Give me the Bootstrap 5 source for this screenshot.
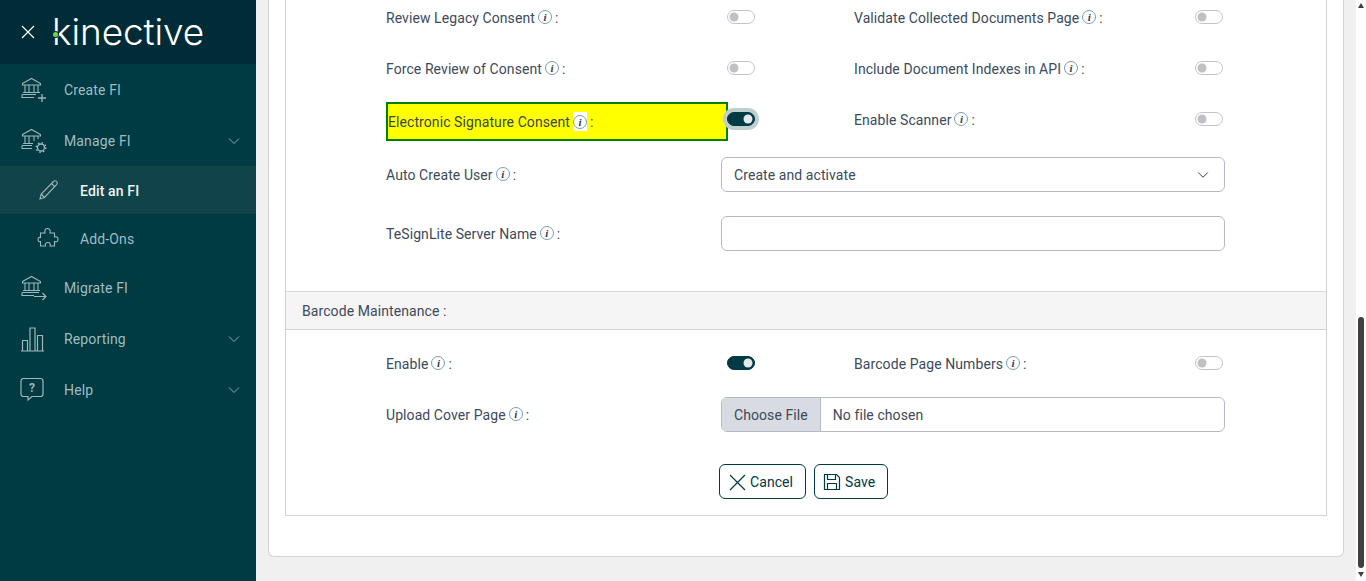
<!DOCTYPE html>
<html lang="en">
<head>
<meta charset="UTF-8">
<meta name="viewport" content="width=device-width, initial-scale=1.0">
<title>Edit an FI</title>
<link rel="stylesheet" href="https://cdn.jsdelivr.net/npm/bootstrap@5.3.0/dist/css/bootstrap.min.css">
<style>
    html, body { height: 100%; overflow: hidden; }
    body { font-family: Roboto, "Liberation Sans", sans-serif; font-size: 14px; letter-spacing: .08px; color: #3d4a5c; background: #f0f0f0; }
    .app-shell { height: 581px; }

    .side-bar { width: 256px; flex: 0 0 256px; background: #003a43; }
    .side-brand { height: 64px; background: #002c37; color: #fff; padding-left: 21px; }
    .brand-name { font-family: Inter, sans-serif; font-weight: 300; font-size: 37px; letter-spacing: -.1px; line-height: 1; margin-left: 17px; position: relative; margin-top: -1px; }
    .brand-dot { position: absolute; left: 1px; top: 19px; width: 5px; height: 5px; border-radius: 50%; background: #6fd44a; box-shadow: 0 0 0 1px #002c37; }
    .side-link { height: 51px; padding: 2px 16px 0 20px; color: #9fbcc1; font-size: 14px; letter-spacing: .14px; }
    .side-link:hover { color: #fff; }
    .side-link svg.side-icon { width: 28px; height: 28px; flex: 0 0 28px; margin: -2px 16px 0 0; color: #9fb6ba; }
    .side-sub { height: 48px; padding-left: 36px; }
    .side-sub svg.side-icon { width: 24px; height: 24px; flex: 0 0 24px; margin-right: 20px; }
    .side-sub.is-active { background: #11434b; color: #eef4f4; font-weight: 500; }
    .side-caret { margin-left: auto; margin-top: -2px; width: 12px; height: 8px; color: #8fa9ae; }

    .main-pane { background: #f0f0f0; padding: 0 12px 24px 12px; min-width: 0; }
    .form-shell { background: #fff; border: 1px solid #d3d3d3; border-top: 0; border-radius: 0 0 6px 6px; padding: 0 16px 40px; height: 557px; }
    .form-box { border: 1px solid #d3d3d3; border-top: 0; height: 516px; }
    .fi-row { height: 51px; padding-left: 100px; }
    .fi-row-first { height: 34px; margin-bottom: 8px; }
    .fi-label { width: 335px; flex: 0 0 335px; padding-top: 2px; }
    .fi-toggle { width: 133px; flex: 0 0 133px; padding-left: 6px; }
    .fi-label-b { width: 341px; flex: 0 0 341px; padding-top: 2px; }
    .fi-row-low .fi-label, .fi-row-low .fi-label-b { padding-top: 4px; }
    .fi-switch { padding-left: 0; min-height: 0; margin: 0; line-height: 1; }
    .fi-switch .form-check-input { margin: 0; float: none; display: block; border-color: #c4c4c8; background-image: url("data:image/svg+xml,%3csvg xmlns='http://www.w3.org/2000/svg' viewBox='-4 -4 8 8'%3e%3ccircle r='3' fill='%23c0c0c6'/%3e%3c/svg%3e"); }
    .fi-switch .form-check-input:checked { background-color: #003a43; border-color: #003a43; background-image: url("data:image/svg+xml,%3csvg xmlns='http://www.w3.org/2000/svg' viewBox='-4 -4 8 8'%3e%3ccircle r='3' fill='%23e4eaea'/%3e%3c/svg%3e"); }
    .fi-switch .is-focused { box-shadow: 0 0 0 4px #bfcfcf; position: relative; }
    .info-dot { display: inline-block; width: 14px; height: 14px; border: 1px solid #7d9bb0; border-radius: 50%; font: italic 700 11px/12px "Liberation Serif", serif; text-align: center; color: #2c3e50; margin: 0 3px 0 3px; vertical-align: 2px; background: #fff; letter-spacing: 0; }
    .fi-marked { width: 342px; flex: 0 0 342px; margin-right: -7px; height: 39px; margin-top: 6px; background: #ff0; border: 2px solid #008000; line-height: 37px; color: #3a4750; white-space: nowrap; }
    .info-cell { display: inline-block; overflow: hidden; width: 14px; height: 19px; margin: 0 3px; padding-top: 3px; background: #fff; vertical-align: -4px; line-height: 0; }
    .info-cell .info-dot { display: block; margin: 0; }

    .fi-input { width: 504px; height: 35px; margin-top: 0; border-color: #b6bac4; border-radius: 6px; font-size: 14px; letter-spacing: .08px; color: #3d4a5c; padding: 1px 12px 0; }
    select.fi-input { padding-right: 36px; background-position: right 13px center; background-size: 16px 12px; background-image: url("data:image/svg+xml,%3csvg xmlns='http://www.w3.org/2000/svg' viewBox='0 0 16 16'%3e%3cpath fill='none' stroke='%23343a40' stroke-linecap='round' stroke-linejoin='round' stroke-width='1.300' d='m2 5 6 6 6-6'/%3e%3c/svg%3e"); }
    input[type=file].fi-input { padding: 0; line-height: 33px; overflow: hidden; }
    .fi-input::file-selector-button { background: #d8dbe1; color: #3d4a5c; padding: 1px 12px 0; height: 33px; margin: 0 12px 0 0; letter-spacing: .08px; }
    .fi-gap-a { margin-top: 13px; }
    .fi-gap-b { margin-top: 24px; }
    .fi-section { height: 39px; margin-top: 40px; margin-bottom: 7px; padding: 2px 0 0 16px; background: #f5f5f5; border-top: 1px solid #d8d8d8; border-bottom: 1px solid #d3d3d3; }
    .fi-gap-c { margin-top: 1px; }
    .fi-actions { padding-left: 433px; margin-top: 24px; }
    .fi-btn { height: 35px; border: 1px solid #003a43; border-radius: 6px; background: #fff; color: #003a43; font-size: 14px; letter-spacing: .08px; padding: 1px 12px 0 8px; }
    .fi-btn svg { flex: 0 0 auto; margin-top: -1px; }

    .scroll-rail { width: 10px; flex: 0 0 10px; background: #fff; position: relative; }
    .scroll-thumb { position: absolute; left: 2px; top: 317px; width: 6px; height: 251px; background: #404040; border-radius: 3px; }
    .scroll-arrow { position: absolute; left: 2px; top: 572px; border-left: 3px solid transparent; border-right: 3px solid transparent; border-top: 5px solid #404040; }
    .scroll-arrow-up { top: 3px; border-top: 0; border-bottom: 5px solid #404040; }
</style>
</head>
<body>

<div class="app-shell d-flex">
    <aside class="side-bar d-flex flex-column">
        <div class="side-brand d-flex align-items-center">
            <svg width="14" height="14" viewBox="0 0 14 14" fill="none" stroke="#fff" stroke-width="1.2"><path d="M1 1l12 12M13 1L1 13"/></svg>
            <div class="brand-name">kinective<span class="brand-dot"></span></div>
        </div>
        <nav class="nav flex-column">
            <a class="nav-link side-link d-flex align-items-center" href="#">
                <svg class="side-icon" viewBox="0 0 28 28" fill="none" stroke="currentColor" stroke-width="1.1">
                    <path d="M2.500 7.500L11.500 2.500l9 5v1.500h-18z"/><path d="M5 9v7M9 9v7M14 9v7M18 9v7M3 16.500h17"/><path d="M2 18.500h14M2 18.500v3h12"/><path d="M22 18v8M18 22h8" stroke-width="1.300"/>
                </svg>
                Create FI
            </a>
            <a class="nav-link side-link d-flex align-items-center" href="#">
                <svg class="side-icon" viewBox="0 0 28 28" fill="none" stroke="currentColor" stroke-width="1.1">
                    <path d="M2.500 7.500L11.500 2.500l9 5v1.500h-18z"/><path d="M5 9v7M9 9v7M14 9v5M18 9v3M3 16.500h10"/><path d="M2 18.500h10M2 18.500v3h10"/><circle cx="21" cy="20.500" r="3.500" stroke-width="1.300"/><circle cx="21" cy="20.500" r="4.800" stroke-dasharray="1.500 2.270" stroke-width="1.500"/>
                </svg>
                Manage FI
                <svg class="side-caret" viewBox="0 0 12 8" fill="none" stroke="currentColor"><path d="M1 1.500l5 5 5-5"/></svg>
            </a>
            <a class="nav-link side-link side-sub is-active d-flex align-items-center" href="#">
                <svg class="side-icon" viewBox="0 0 24 24" fill="none" stroke="currentColor" stroke-width="1.1">
                    <path d="M4 21l1.200-5L17.500 3.500c1-1 2.500-.8 3.200 0s.8 2.200-.2 3.200L8.500 19.500z"/><path d="M15.500 5.500l3.500 3.500M5.200 16l3.300 3.500"/>
                </svg>
                Edit an FI
            </a>
            <a class="nav-link side-link side-sub d-flex align-items-center" href="#">
                <svg class="side-icon" viewBox="0 0 24 24" fill="none" stroke="currentColor" stroke-width="1.1">
                    <path d="M9 7c-1-3 1-4.500 2.500-4.500S15 4 14 7h4.500v4c3-1 3.500 1 3.500 2.500S21 16.500 18.500 15.500V20h-4.500c1-2.500-.5-3.500-2-3.500S8.500 17.500 9.500 20H4.500v-4.500c-2 .8-2.500-1-2.500-2s.5-2.800 2.500-2V7z"/>
                </svg>
                Add-Ons
            </a>
            <a class="nav-link side-link d-flex align-items-center" href="#">
                <svg class="side-icon" viewBox="0 0 28 28" fill="none" stroke="currentColor" stroke-width="1.1">
                    <path d="M2.500 7.500L11.500 2.500l9 5v1.500h-18z"/><path d="M5 9v7M9 9v7M14 9v7M18 9v7M3 16.500h17"/><path d="M2 18.500h17M2 18.500v3h12"/><path d="M14 22.500h12M22.500 19l3.500 3.500-3.500 3.500" stroke-width="1.200"/>
                </svg>
                Migrate FI
            </a>
            <a class="nav-link side-link d-flex align-items-center" href="#">
                <svg class="side-icon" viewBox="0 0 28 28" fill="none" stroke="currentColor" stroke-width="1.200">
                    <path d="M1 26h23M2.500 26V15.500h5V26M10 26V3h5v23M17.500 26V10.500h5V26"/>
                </svg>
                Reporting
                <svg class="side-caret" viewBox="0 0 12 8" fill="none" stroke="currentColor"><path d="M1 1.500l5 5 5-5"/></svg>
            </a>
            <a class="nav-link side-link d-flex align-items-center" href="#">
                <svg class="side-icon" viewBox="0 0 28 28" fill="none" stroke="currentColor" stroke-width="1.200">
                    <path d="M3.500 2.500h17a2.500 2.500 0 0 1 2.500 2.500v13a2.500 2.500 0 0 1-2.500 2.500H12l-4 3.500v-3.500H3.500A2.500 2.500 0 0 1 1 18V5a2.500 2.500 0 0 1 2.500-2.500z"/>
                    <text x="12" y="16" text-anchor="middle" font-family="Roboto, sans-serif" font-size="12" font-weight="700" fill="currentColor" stroke="none">?</text>
                </svg>
                Help
                <svg class="side-caret" viewBox="0 0 12 8" fill="none" stroke="currentColor"><path d="M1 1.500l5 5 5-5"/></svg>
            </a>
        </nav>
    </aside>

    <main class="main-pane flex-grow-1">
        <div class="form-shell">
            <div class="form-box">
                <div class="fi-row fi-row-first d-flex align-items-center">
                    <div class="fi-label">Review Legacy Consent<span class="info-dot">i</span>:</div>
                    <div class="fi-toggle"><div class="form-check form-switch fi-switch"><input class="form-check-input" type="checkbox" role="switch"></div></div>
                    <div class="fi-label-b">Validate Collected Documents Page<span class="info-dot">i</span>:</div>
                    <div class="form-check form-switch fi-switch"><input class="form-check-input" type="checkbox" role="switch"></div>
                </div>
                <div class="fi-row fi-row-low d-flex align-items-center">
                    <div class="fi-label">Force Review of Consent<span class="info-dot">i</span>:</div>
                    <div class="fi-toggle"><div class="form-check form-switch fi-switch"><input class="form-check-input" type="checkbox" role="switch"></div></div>
                    <div class="fi-label-b">Include Document Indexes in API<span class="info-dot">i</span>:</div>
                    <div class="form-check form-switch fi-switch"><input class="form-check-input" type="checkbox" role="switch"></div>
                </div>
                <div class="fi-row fi-row-low d-flex align-items-center">
                    <div class="fi-marked">Electronic Signature Consent<span class="info-cell"><span class="info-dot">i</span></span>:</div>
                    <div class="fi-toggle"><div class="form-check form-switch fi-switch"><input class="form-check-input is-focused" type="checkbox" role="switch" checked></div></div>
                    <div class="fi-label-b">Enable Scanner<span class="info-dot">i</span>:</div>
                    <div class="form-check form-switch fi-switch"><input class="form-check-input" type="checkbox" role="switch"></div>
                </div>
                <div class="fi-row fi-gap-a d-flex align-items-center" style="height:35px">
                    <div class="fi-label">Auto Create User<span class="info-dot">i</span>:</div>
                    <select class="form-select fi-input"><option>Create and activate</option></select>
                </div>
                <div class="fi-row fi-gap-b d-flex align-items-center" style="height:35px">
                    <div class="fi-label">TeSignLite Server Name<span class="info-dot">i</span>:</div>
                    <input type="text" class="form-control fi-input">
                </div>

                <div class="fi-section d-flex align-items-center">Barcode Maintenance :</div>

                <div class="fi-row fi-row-low d-flex align-items-center">
                    <div class="fi-label">Enable<span class="info-dot">i</span>:</div>
                    <div class="fi-toggle"><div class="form-check form-switch fi-switch"><input class="form-check-input" type="checkbox" role="switch" checked></div></div>
                    <div class="fi-label-b">Barcode Page Numbers<span class="info-dot">i</span>:</div>
                    <div class="form-check form-switch fi-switch"><input class="form-check-input" type="checkbox" role="switch"></div>
                </div>
                <div class="fi-row fi-gap-c d-flex align-items-center">
                    <div class="fi-label">Upload Cover Page<span class="info-dot">i</span>:</div>
                    <input type="file" class="form-control fi-input">
                </div>

                <div class="fi-actions d-flex gap-2">
                    <button type="button" class="btn fi-btn d-flex align-items-center gap-1">
                        <svg width="18" height="18" viewBox="0 0 18 18" fill="none" stroke="currentColor" stroke-width="1.200"><path d="M2 2l15 15M17 2L2 17"/></svg>
                        Cancel
                    </button>
                    <button type="button" class="btn fi-btn d-flex align-items-center gap-1">
                        <svg width="18" height="18" viewBox="0 0 18 18" fill="none" stroke="currentColor" stroke-width="1.200"><path d="M1.500 1.500h12l3 3v12h-15z"/><path d="M4.500 1.500v5h8v-5M4.500 16.500v-6h9v6"/></svg>
                        Save
                    </button>
                </div>
            </div>
        </div>
    </main>

    <div class="scroll-rail">
        <span class="scroll-arrow scroll-arrow-up"></span>
        <span class="scroll-thumb"></span>
        <span class="scroll-arrow"></span>
    </div>
</div>

<script src="https://cdn.jsdelivr.net/npm/bootstrap@5.3.0/dist/js/bootstrap.bundle.min.js"></script>
</body>
</html>
